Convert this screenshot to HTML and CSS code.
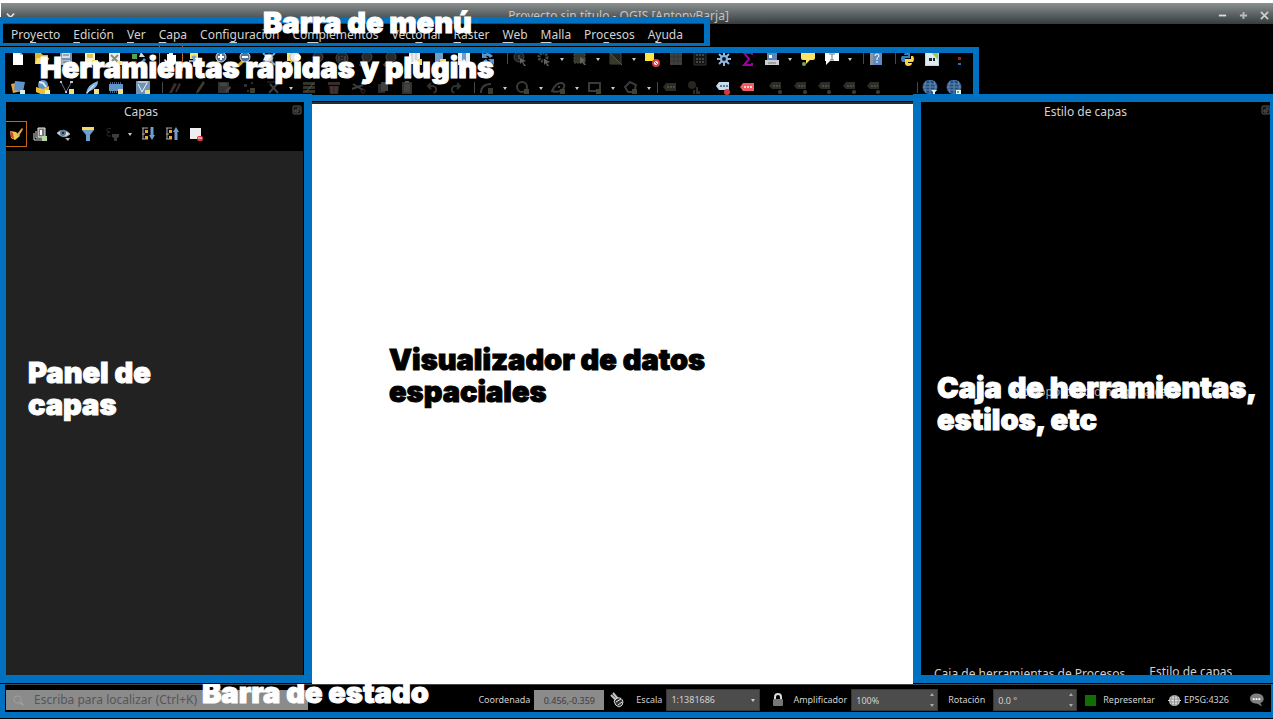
FILE: index.html
```html
<!DOCTYPE html>
<html lang="es">
<head>
<meta charset="utf-8">
<title>Proyecto sin título - QGIS</title>
<meta name="viewport" content="width=device-width, initial-scale=1">
<link rel="stylesheet" href="styles.css">
</head>
<body>
<svg class="sprite" aria-hidden="true">
  <symbol id="new" viewBox="0 0 16 16"><path d="M3 1h7l3 3v10H3z" fill="#fff"/><path d="M10 1l3 3h-3z" fill="#bbb"/></symbol>
  <symbol id="open" viewBox="0 0 16 16"><path d="M1 2h6l2 2h5v9H1z" fill="#e0b82c"/><path d="M3 7h12l-2 6H1z" fill="#fbe36b"/></symbol>
  <symbol id="save" viewBox="0 0 16 16"><path d="M2 2h12v12H2z" fill="#6f93bd"/><path d="M4 2h8v5H4z" fill="#d9dde2"/><path d="M4 9h8v5H4z" fill="#b5bcc5"/><path d="M5 4h6M5 11h6" stroke="#667"/></symbol>
  <symbol id="layout" viewBox="0 0 16 16"><path d="M2 1h10v12H2z" fill="#f6f2d5"/><path d="M4 3h6v4H4z" fill="#e5c646"/><path d="M9 9h6v5H9z" fill="#fbe36b"/></symbol>
  <symbol id="manager" viewBox="0 0 16 16"><path d="M2 1h11v13H2z" fill="#eee"/><path d="M4 4l8 8M11 4l-6 6" stroke="#8b8b75" stroke-width="2"/><path d="M10 10h5v4h-5z" fill="#fbe36b"/></symbol>
  <symbol id="style" viewBox="0 0 16 16"><path d="M1 3h5v5H1z" fill="#54a04b"/><path d="M10 1l4 5H8z" fill="#d9d9d9"/><circle cx="4" cy="12" r="2" fill="#d44"/><path d="M8 13l5-6 2 2-5 5z" fill="#5f90c5"/></symbol>
  <symbol id="hand" viewBox="0 0 16 16"><path d="M5 15L1 9l1-1 2 2V3h2v4-6h2v6-5h2v5-3h3v8l-3 3z" fill="#fff"/></symbol>
  <symbol id="pansel" viewBox="0 0 16 16"><path d="M3 2h8v6H3z" fill="#fbe36b"/><path d="M7 5v10M2 10h11M7 5L5 7m2-2l2 2M13 10l-2-2m2 2l-2 2" stroke="#78a5d6" stroke-width="2" fill="none"/></symbol>
  <symbol id="zin" viewBox="0 0 16 16"><path d="M7 10l-5 5" stroke="#d9aa23" stroke-width="3"/><circle cx="9" cy="6" r="5" fill="#54749d" stroke="#ddd"/><path d="M6 6h6M9 3v6" stroke="#fff" stroke-width="2"/></symbol>
  <symbol id="zout" viewBox="0 0 16 16"><path d="M7 10l-5 5" stroke="#d9aa23" stroke-width="3"/><circle cx="9" cy="6" r="5" fill="#54749d" stroke="#ddd"/><path d="M6 6h6" stroke="#fff" stroke-width="2"/></symbol>
  <symbol id="zfull" viewBox="0 0 16 16"><path d="M2 2l12 12M14 2L2 14" stroke="#78a5d6" stroke-width="2"/><circle cx="8" cy="7" r="4" fill="#cfd8e2" stroke="#999"/></symbol>
  <symbol id="zsel" viewBox="0 0 16 16"><path d="M2 1h6v9H2z" fill="#fbe36b"/><circle cx="10" cy="6" r="5" fill="#e8e8df" stroke="#bbb"/><path d="M7 10l-4 5" stroke="#d9aa23" stroke-width="2"/></symbol>
  <symbol id="zdim" viewBox="0 0 16 16"><path d="M6 10l-4 5" stroke="#3e3a31" stroke-width="3"/><circle cx="9" cy="6" r="5" fill="#292929" stroke="#484848"/></symbol>
  <symbol id="zone" viewBox="0 0 16 16"><circle cx="8" cy="7" r="6" fill="#222" stroke="#4a4a4a"/><path d="M5 5v5M11 5v5M8 5v1M8 8v1" stroke="#555"/></symbol>
  <symbol id="newmap" viewBox="0 0 16 16"><path d="M2 1h11v12H2z" fill="#eee"/><path d="M5 1v10M9 1v8" stroke="#bbb"/><path d="M10 8h5v6h-5z" fill="#f8dd5e"/></symbol>
  <symbol id="bookmark" viewBox="0 0 16 16"><path d="M4 1h8v12l-4-3-4 3z" fill="#6f9dcc"/><path d="M9 8h6v6H9z" fill="#f8dd5e"/></symbol>
  <symbol id="books" viewBox="0 0 16 16"><path d="M2 1h12v13H2z" fill="#e9edf1"/><path d="M6 1h4v9l-2-2-2 2z" fill="#6f9dcc"/></symbol>
  <symbol id="refresh" viewBox="0 0 16 16"><path d="M2 7V1l2 2q5-3 9 2l-3 2q-2-3-4-2l2 2zM14 8v6l-2-2q-5 3-9-2l3-2q2 3 4 2L8 8z" fill="#5b93cf"/></symbol>
  <symbol id="ident" viewBox="0 0 16 16"><circle cx="7" cy="6" r="5" fill="#202124" stroke="#444"/><path d="M7 4v4" stroke="#686868"/><path d="M8 7l6 3-3 1 3 4-2 0-2-4-2 2z" fill="#626262"/></symbol>
  <symbol id="cogdim" viewBox="0 0 16 16"><circle cx="7" cy="6" r="4" fill="none" stroke="#484848" stroke-width="3" stroke-dasharray="2 1"/><path d="M8 8l6 3-3 1 2 3-2 0-1-3-2 2z" fill="#626262"/></symbol>
  <symbol id="selrect" viewBox="0 0 16 16"><path d="M2 2h11v10H2z" fill="#37372c" stroke="#484840" stroke-dasharray="2 1"/><path d="M8 6l6 3-3 1 3 4-2 0-2-3-2 2z" fill="#626262"/></symbol>
  <symbol id="invert" viewBox="0 0 16 16"><path d="M2 2h11v11H2z" fill="#23231c" stroke="#444"/><path d="M2 2v11h11z" fill="#38382b"/><path d="M2 2l12 12" stroke="#555"/></symbol>
  <symbol id="desel" viewBox="0 0 16 16"><path d="M1 1h9v9H1z" fill="#ffe53e"/><circle cx="12" cy="12" r="3" fill="#fff" stroke="#e23b42" stroke-width="2"/><path d="M10 10l4 4" stroke="#e23b42"/></symbol>
  <symbol id="table" viewBox="0 0 16 16"><path d="M2 2h12v12H2z" fill="#404040"/><path d="M2 6h12M2 10h12M6 2v12M10 2v12" stroke="#333"/></symbol>
  <symbol id="abacus" viewBox="0 0 16 16"><path d="M2 1h12v13H2z" fill="#151515" stroke="#333"/><path d="M4 4h8M4 8h8M4 11h8" stroke="#444" stroke-width="2" stroke-dasharray="2 1"/></symbol>
  <symbol id="gear" viewBox="0 0 16 16"><path d="M8 1v14M1 8h14M3 3l10 10M13 3L3 13" stroke="#8fb6e1" stroke-width="2"/><circle cx="8" cy="8" r="4" fill="#8fb6e1"/><circle cx="8" cy="8" r="2" fill="#111a24"/></symbol>
  <symbol id="sigma" viewBox="0 0 16 16"><path d="M12 4V2H4l5 6-5 6h8v-2" fill="none" stroke="#a000a0" stroke-width="2"/></symbol>
  <symbol id="measure" viewBox="0 0 16 16"><path d="M3 1h10v8H3z" fill="#5b87b8"/><path d="M5 4h3v3H5z" fill="#fff"/><path d="M1 9h14v5H1z" fill="#c9ccd0"/><path d="M4 12h8" stroke="#777"/></symbol>
  <symbol id="tip" viewBox="0 0 16 16"><rect x="1" y="0" width="14" height="9" rx="2" fill="#fbe36b"/><path d="M6 8h5l-5 5z" fill="#fbe36b"/><circle cx="4" cy="13" r="2" fill="#7aa65e"/></symbol>
  <symbol id="textann" viewBox="0 0 16 16"><path d="M1 0h14v10H6l-4 4v-4H1z" fill="#fff"/><path d="M5 3h6M8 3v6M6 9h4" stroke="#777"/></symbol>
  <symbol id="help" viewBox="0 0 16 16"><path d="M2 1h12v13H2z" fill="#5b8bc2"/><path d="M2 1h3v13H2z" fill="#8f969d"/><path d="M7 5q0-2 2-2t2 2q0 1-2 2v2M9 10v2" stroke="#fff" fill="none"/></symbol>
  <symbol id="python" viewBox="0 0 16 16"><path d="M5 1h5v6H5v4H2q-2-4 0-6h6V4H4z" fill="#3d7fb4"/><path d="M11 5h2q2 3 0 6H8v1h4q0 3-4 3-3 0-3-3V8h6z" fill="#ffd43b"/></symbol>
  <symbol id="mapsearch" viewBox="0 0 16 16"><path d="M1 0h14v15H1z" fill="#b9d6e5"/><path d="M2 1h12v13H2z" fill="#dcecf3"/><path d="M7 1h7v8z" fill="#9ccb4a"/><path d="M5 7h3v3H5zM9 7h2v3H9z" fill="#222"/></symbol>
  <symbol id="dots" viewBox="0 0 16 16"><path d="M7 6h3v3H7z" fill="#9c1c27"/><path d="M7 12h3v2H7z" fill="#3a69a5"/></symbol>
  <symbol id="arrow" viewBox="0 0 8 8"><path d="M2 3h4L4 6z" fill="#ccc"/></symbol>

  <symbol id="source" viewBox="0 0 16 16"><path d="M1 4l9-2 2 9-9 2z" fill="#eda53b"/><path d="M5 1l10 1-2 10-9-2z" fill="#5f93cb"/><path d="M10 10h5v5h-5z" fill="#ddeed5"/></symbol>
  <symbol id="geopkg" viewBox="0 0 16 16"><circle cx="8" cy="5" r="5" fill="#5f93cb"/><path d="M4 2l4 1 3 4" stroke="#dfe9f2" stroke-width="2" fill="none"/><path d="M1 7l7 2 6-3v6l-6 3-7-3z" fill="#f0bd35"/><path d="M10 10h5v5h-5z" fill="#fbf3a0"/></symbol>
  <symbol id="shape" viewBox="0 0 16 16"><path d="M2 2l5 10 5-9" fill="none" stroke="#6c7580"/><path d="M1 1h2v2H1zM11 1h3v2h-3zM6 11h2v2H6z" fill="#b5c5d5"/><path d="M10 9h5v5h-5z" fill="#f8dd7e"/></symbol>
  <symbol id="feather" viewBox="0 0 16 16"><path d="M2 13Q4 4 14 1q0 6-6 9-3 1-5 4z" fill="#85b4e3"/><path d="M3 13l7-8" stroke="#e9f2fa"/><path d="M10 9h5v5h-5z" fill="#f8dd7e"/></symbol>
  <symbol id="chip" viewBox="0 0 16 16"><path d="M1 4h14v7H1z" fill="#5f93cb"/><path d="M2 3h12M2 12h7" stroke="#a7c5e2" stroke-dasharray="1 1"/><path d="M10 9h5v5h-5z" fill="#f8dd7e"/></symbol>
  <symbol id="virtual" viewBox="0 0 16 16"><path d="M1 1h14v14H1z" fill="#7192b3"/><path d="M3 4l4 8 5-9M3 2h10" fill="none" stroke="#e9f2fa"/><path d="M10 10h5v5h-5z" fill="#f8dd7e"/></symbol>
  <symbol id="pencils" viewBox="0 0 16 16"><path d="M2 13l5-10 3 1-5 9zM8 12l4-9 2 1-4 8z" fill="#3b2d2a"/></symbol>
  <symbol id="pencil" viewBox="0 0 16 16"><path d="M4 14l1-4 6-9 2 2-6 9z" fill="#3d3b2d"/></symbol>
  <symbol id="savedim" viewBox="0 0 16 16"><path d="M2 2h11v11H2z" fill="#333"/><path d="M4 3h7v3H4z" fill="#454545"/><path d="M9 11l5-5 1 2-5 5z" fill="#4a4837"/></symbol>
  <symbol id="points" viewBox="0 0 16 16"><path d="M3 4h3v3H3zM10 2h2v2h-2zM6 10h2v2H6z" fill="#303030"/><path d="M9 8h5v5H9z" fill="#413e2c"/></symbol>
  <symbol id="vertex" viewBox="0 0 16 16"><path d="M5 4l8 9M13 3L4 13" stroke="#3e3e3e" stroke-width="2"/><path d="M2 2h9v3" fill="none" stroke="#333"/></symbol>
  <symbol id="multi" viewBox="0 0 16 16"><path d="M2 2h12v3H2zM2 6h12v3H2zM2 10h12v3H2z" fill="#34332c"/><path d="M5 12l8-9" stroke="#5c5a49"/></symbol>
  <symbol id="trash" viewBox="0 0 16 16"><path d="M2 2h12v3H2zM3 6h10l-1 8H4z" fill="#392a27"/><path d="M6 6v7M10 6v7" stroke="#484040"/></symbol>
  <symbol id="cut" viewBox="0 0 16 16"><path d="M3 4l10 6M2 9l11-4" stroke="#3c3c3c" stroke-width="2"/><circle cx="13" cy="11" r="2" fill="none" stroke="#3d2828"/></symbol>
  <symbol id="copy" viewBox="0 0 16 16"><path d="M3 4h7v9H3z" fill="#2b2b2b"/><path d="M6 2h7v9H6z" fill="#404040"/></symbol>
  <symbol id="paste" viewBox="0 0 16 16"><path d="M3 2h10v12H3z" fill="#34322c"/><path d="M5 4h6v8H5z" fill="#424242"/><path d="M6 1h4v2H6z" fill="#555"/></symbol>
  <symbol id="undo" viewBox="0 0 16 16"><path d="M7 3L4 6l3 3M4 6h4q5 0 4 5l-2 2" fill="none" stroke="#382f29" stroke-width="2"/></symbol>
  <symbol id="redo" viewBox="0 0 16 16"><path d="M9 3l3 3-3 3M12 6H8q-5 0-4 5l2 2" fill="none" stroke="#2b342c" stroke-width="2"/></symbol>
  <symbol id="curve" viewBox="0 0 16 16"><path d="M2 13Q2 4 12 4" fill="none" stroke="#3c3c3c" stroke-width="2"/><path d="M9 8h5v6H9z" fill="#3d3a2b"/></symbol>
  <symbol id="circ" viewBox="0 0 16 16"><circle cx="7" cy="7" r="5" fill="none" stroke="#3a3a3a" stroke-width="2"/><path d="M9 9h5v5H9z" fill="#444133"/></symbol>
  <symbol id="ell" viewBox="0 0 16 16"><path d="M1 11Q5 2 11 3q5 2 0 7-4 3-10 1z" fill="none" stroke="#3a3a3a" stroke-width="2"/><circle cx="8" cy="7" r="1" fill="#555"/><path d="M9 9h5v5H9z" fill="#444133"/></symbol>
  <symbol id="rect" viewBox="0 0 16 16"><path d="M2 3h11v8H2z" fill="none" stroke="#3a3a3a" stroke-width="2"/><path d="M9 9h5v5H9z" fill="#444133"/></symbol>
  <symbol id="poly" viewBox="0 0 16 16"><path d="M2 7l5-5 6 3-2 7H5z" fill="none" stroke="#3a3a3a" stroke-width="2"/><path d="M9 9h5v5H9z" fill="#444133"/></symbol>
  <symbol id="tagdim" viewBox="0 0 16 16"><path d="M1 7l3-4h10v8H4z" fill="#2d2c26"/><path d="M5 7h8" stroke="#4a493f" stroke-width="2" stroke-dasharray="2 1"/></symbol>
  <symbol id="tagdim2" viewBox="0 0 16 16"><path d="M1 6l3-4h9v7H4z" fill="#2d2c26"/><path d="M5 6h7" stroke="#4a493f" stroke-width="2" stroke-dasharray="2 1"/><circle cx="12" cy="12" r="2" fill="#3c3c3c"/></symbol>
  <symbol id="piedim" viewBox="0 0 16 16"><circle cx="6" cy="5" r="4" fill="#26271f"/><path d="M6 1v4l4 0" fill="#352020"/><path d="M8 14v-4M11 14V7M13 14v-3" stroke="#2d2d2d" stroke-width="2"/></symbol>
  <symbol id="tagblue" viewBox="0 0 16 16"><path d="M1 6l3-4h10v8H4z" fill="#c7dcf2"/><path d="M5 6h8" stroke="#6c7988" stroke-width="2" stroke-dasharray="2 1"/><circle cx="12" cy="12" r="3" fill="#d33b3b"/></symbol>
  <symbol id="tagred" viewBox="0 0 16 16"><path d="M1 7l3-4h11v8H4z" fill="#f15b62"/><path d="M5 7h9" stroke="#ffd4d4" stroke-width="2" stroke-dasharray="2 1"/></symbol>
  <symbol id="globe" viewBox="0 0 16 16"><circle cx="8" cy="7" r="7" fill="#234f80" stroke="#3f6c9f"/><path d="M1 7h14M2 4h12M2 10h12M8 0v14M4 1q-3 6 0 12M12 1q3 6 0 12" fill="none" stroke="#6288b2"/><path d="M9 10h6l-2 2v3h-2v-3z" fill="#e8f5e5"/></symbol>
  <symbol id="globe2" viewBox="0 0 16 16"><circle cx="8" cy="7" r="7" fill="#234f80" stroke="#3f6c9f"/><path d="M1 7h14M2 4h12M2 10h12M8 0v14M4 1q-3 6 0 12M12 1q3 6 0 12" fill="none" stroke="#6288b2"/><path d="M10 10h5v5h-5z" fill="#e8f5e5"/><circle cx="12" cy="12" r="1" fill="#486"/></symbol>

  <symbol id="brush" viewBox="0 0 16 16"><path d="M2 5l6 1 4 4-5 4-4-2z" fill="#f2c94c"/><path d="M2 5l3 2 1 6-3-2z" fill="#d6403c"/><path d="M9 8l5-6 1 1-4 7z" fill="#f2a54c"/><path d="M7 7l4 4" stroke="#b5c25f"/></symbol>
  <symbol id="group" viewBox="0 0 16 16"><path d="M2 7v7h8M4 5v7h8" fill="none" stroke="#ddd"/><path d="M6 2h7v9H6z" fill="#777" stroke="#eee"/><path d="M9 4v5" stroke="#fff" stroke-width="2"/><path d="M10 10h5v5h-5z" fill="#b5d8ac"/></symbol>
  <symbol id="eye" viewBox="0 0 16 16"><path d="M1 7q6-6 13 1-6 6-13-1z" fill="#ddd" stroke="#999"/><circle cx="7" cy="7" r="3" fill="#51779e"/><circle cx="7" cy="7" r="1" fill="#111"/><path d="M9 12h5l-2 3z" fill="#bbb"/></symbol>
  <symbol id="filter" viewBox="0 0 16 16"><path d="M2 4h12L10 9v6H6V9z" fill="#6f9dcc"/><path d="M2 1h12v3H2z" fill="#f4dc59"/></symbol>
  <symbol id="epsfilter" viewBox="0 0 16 16"><path d="M7 3Q2 1 3 5l3 1q-5 1-2 4h3" fill="none" stroke="#292929"/><path d="M8 8h7v3l-2 1v3h-3v-3l-2-1z" fill="#3c3c3c"/></symbol>
  <symbol id="expand" viewBox="0 0 16 16"><path d="M2 2h6M2 8h3M2 13h6M3 2v11" fill="none" stroke="#aaa"/><path d="M5 4h3v3H5zM5 10h3v3H5z" fill="#f0a23c"/><path d="M12 1v9" stroke="#6f9dcc" stroke-width="3"/><path d="M9 9h6l-3 5z" fill="#6f9dcc"/></symbol>
  <symbol id="collapse" viewBox="0 0 16 16"><path d="M2 2h6M2 8h3M2 13h6M3 2v11" fill="none" stroke="#aaa"/><path d="M5 4h3v3H5zM5 10h3v3H5z" fill="#f0a23c"/><path d="M12 5v9" stroke="#6f9dcc" stroke-width="3"/><path d="M9 6h6l-3-5z" fill="#6f9dcc"/></symbol>
  <symbol id="remove" viewBox="0 0 16 16"><path d="M2 2h11v11H2z" fill="#eee"/><rect x="9" y="10" width="6" height="5" rx="2" fill="#dc3845"/><path d="M10 12h4" stroke="#fff"/></symbol>
  <symbol id="float" viewBox="0 0 10 10"><rect x="1" y="1" width="8" height="8" rx="1" fill="#161616" stroke="#555"/><path d="M3 5h3v2H3zM5 3h2v2" fill="none" stroke="#555"/></symbol>

  <symbol id="search" viewBox="0 0 12 12"><circle cx="5" cy="5" r="4" fill="none" stroke="#a0a0a0"/><path d="M8 8l3 3" stroke="#a0a0a0" stroke-width="2"/></symbol>
  <symbol id="mouse" viewBox="0 0 16 16"><path d="M2 3l6 6M4 1l5 6" stroke="#c6c6c6" stroke-width="2"/><path d="M8 6q5-1 6 4 0 4-4 5-4-1-5-6z" fill="#333" stroke="#ddd"/><path d="M7 10l5-3M9 13l4-3" stroke="#eee"/></symbol>
  <symbol id="lock" viewBox="0 0 12 16"><path d="M3 8V5q0-3 3-3t3 3v3" fill="none" stroke="#ddd" stroke-width="2"/><rect x="1" y="7" width="10" height="7" rx="1" fill="#777"/></symbol>
  <symbol id="crs" viewBox="0 0 14 14"><circle cx="7" cy="7" r="6" fill="#b5b5b5"/><path d="M0 7h14M2 4h10M2 10h10" stroke="#e4e4e4"/><path d="M7 1v12M4 2q-2 5 0 10M10 2q2 5 0 10" fill="none" stroke="#8a8a8a"/></symbol>
  <symbol id="bubble" viewBox="0 0 16 14"><path d="M8 0c10 0 9 10 4 10l2 4-5-3C-2 11-1 0 8 0z" fill="#808080"/><path d="M4 5h2v2H4zM7 5h2v2H7zM10 5h2v2h-2z" fill="#fff"/></symbol>
</svg>

<div class="app">
  <header class="titlebar">
    <button class="win" aria-label="Menú de ventana"><svg viewBox="0 0 10 10"><path d="M1 3l4 4 4-4" fill="none" stroke="#ddd" stroke-width="2"/></svg></button>
    <h1>Proyecto sin título - QGIS [AntonyBarja]</h1>
    <div class="wincontrols">
      <button class="win" aria-label="Minimizar"><svg viewBox="0 0 10 10"><path d="M1 5h8" stroke="#ddd" stroke-width="2"/></svg></button>
      <button class="win" aria-label="Maximizar"><svg viewBox="0 0 10 10"><path d="M1 5h8M5 1v8" stroke="#bbb" stroke-width="2"/></svg></button>
      <button class="win" aria-label="Cerrar"><svg viewBox="0 0 10 10"><path d="M1 1l8 8M9 1L1 9" stroke="#ccc" stroke-width="2"/></svg></button>
    </div>
  </header>

  <nav class="menubar">
    <button>Pro<u>y</u>ecto</button><button><u>E</u>dición</button><button><u>V</u>er</button><button><u>C</u>apa</button><button>Confi<u>g</u>uración</button><button>Co<u>m</u>plementos</button><button>Vect<u>o</u>rial</button><button><u>R</u>aster</button><button><u>W</u>eb</button><button><u>M</u>alla</button><button>Pro<u>c</u>esos</button><button>A<u>y</u>uda</button>
    <div class="frame frame-menu"></div>
    <p class="note note-menu">Barra de menú</p>
  </nav>

  <section class="toolbars">
    <div class="toolbar">
      <div class="group g6">
        <button aria-label="Nuevo"><svg><use href="#new"/></svg></button><button aria-label="Abrir"><svg><use href="#open"/></svg></button><button aria-label="Guardar"><svg><use href="#save"/></svg></button><button aria-label="Nueva composición"><svg><use href="#layout"/></svg></button><button aria-label="Administrador"><svg><use href="#manager"/></svg></button><button aria-label="Estilos"><svg><use href="#style"/></svg></button>
      </div>
      <i class="sep plain"></i>
      <div class="group g14">
        <button class="active" aria-label="Desplazar"><svg><use href="#hand"/></svg></button><button aria-label="Desplazar a selección"><svg><use href="#pansel"/></svg></button><button aria-label="Acercar"><svg><use href="#zin"/></svg></button><button aria-label="Alejar"><svg><use href="#zout"/></svg></button><button aria-label="Zum general"><svg><use href="#zfull"/></svg></button><button aria-label="Zum a selección"><svg><use href="#zsel"/></svg></button><button aria-label="Zum a capa"><svg><use href="#zdim"/></svg></button><button aria-label="Zum nativo"><svg><use href="#zone"/></svg></button><button aria-label="Zum anterior"><svg><use href="#zdim"/></svg></button><button aria-label="Zum siguiente"><svg><use href="#zdim"/></svg></button><button aria-label="Nueva vista"><svg><use href="#newmap"/></svg></button><button aria-label="Nuevo marcador"><svg><use href="#bookmark"/></svg></button><button aria-label="Marcadores"><svg><use href="#books"/></svg></button><button aria-label="Actualizar"><svg><use href="#refresh"/></svg></button>
      </div>
      <i class="sep"></i>
      <button aria-label="Identificar"><svg><use href="#ident"/></svg></button><button aria-label="Acciones"><svg><use href="#cogdim"/></svg></button><button class="more" aria-label="Más acciones"><svg><use href="#arrow"/></svg></button><button aria-label="Seleccionar"><svg><use href="#selrect"/></svg></button><button class="more" aria-label="Más selección"><svg><use href="#arrow"/></svg></button><button aria-label="Invertir"><svg><use href="#invert"/></svg></button><button class="more" aria-label="Más inversión"><svg><use href="#arrow"/></svg></button><button aria-label="Deseleccionar"><svg><use href="#desel"/></svg></button><button aria-label="Tabla de atributos"><svg><use href="#table"/></svg></button><button aria-label="Calculadora"><svg><use href="#abacus"/></svg></button><button aria-label="Procesos"><svg><use href="#gear"/></svg></button><button aria-label="Estadísticas"><svg><use href="#sigma"/></svg></button><button aria-label="Medir"><svg><use href="#measure"/></svg></button><button class="more" aria-label="Más medidas"><svg><use href="#arrow"/></svg></button><button aria-label="Avisos del mapa"><svg><use href="#tip"/></svg></button><button aria-label="Anotación"><svg><use href="#textann"/></svg></button><button class="more" aria-label="Más anotaciones"><svg><use href="#arrow"/></svg></button>
      <i class="sep"></i>
      <button aria-label="Ayuda"><svg><use href="#help"/></svg></button>
      <i class="sep"></i>
      <button aria-label="Consola de Python"><svg><use href="#python"/></svg></button><button aria-label="Buscar en el mapa"><svg><use href="#mapsearch"/></svg></button><i class="sep small"></i><button aria-label="Complemento"><svg><use href="#dots"/></svg></button>
    </div>
    <div class="toolbar">
      <div class="group g5">
        <button aria-label="Fuentes de datos"><svg><use href="#source"/></svg></button><button aria-label="Nuevo GeoPackage"><svg><use href="#geopkg"/></svg></button><button aria-label="Nuevo shapefile"><svg><use href="#shape"/></svg></button><button aria-label="Nueva SpatiaLite"><svg><use href="#feather"/></svg></button><button aria-label="Nueva capa temporal"><svg><use href="#chip"/></svg></button>
      </div>
      <i class="sep small"></i>
      <button aria-label="Capa virtual"><svg><use href="#virtual"/></svg></button>
      <i class="sep"></i>
      <div class="group g5">
        <button aria-label="Ediciones actuales"><svg><use href="#pencils"/></svg></button><button aria-label="Conmutar edición"><svg><use href="#pencil"/></svg></button><button aria-label="Guardar cambios"><svg><use href="#savedim"/></svg></button><button aria-label="Añadir punto"><svg><use href="#points"/></svg></button><button aria-label="Vértices"><svg><use href="#vertex"/></svg></button>
      </div>
      <button class="more" aria-label="Más vértices"><svg><use href="#arrow"/></svg></button>
      <div class="group g7">
        <button aria-label="Modificar atributos"><svg><use href="#multi"/></svg></button><button aria-label="Borrar"><svg><use href="#trash"/></svg></button><button aria-label="Cortar"><svg><use href="#cut"/></svg></button><button aria-label="Copiar"><svg><use href="#copy"/></svg></button><button aria-label="Pegar"><svg><use href="#paste"/></svg></button><button aria-label="Deshacer"><svg><use href="#undo"/></svg></button><button aria-label="Rehacer"><svg><use href="#redo"/></svg></button>
      </div>
      <i class="sep short"></i>
      <button aria-label="Curva"><svg><use href="#curve"/></svg></button><button class="more" aria-label="Más curvas"><svg><use href="#arrow"/></svg></button><button aria-label="Círculo"><svg><use href="#circ"/></svg></button><button class="more" aria-label="Más círculos"><svg><use href="#arrow"/></svg></button><button aria-label="Elipse"><svg><use href="#ell"/></svg></button><button class="more" aria-label="Más elipses"><svg><use href="#arrow"/></svg></button><button aria-label="Rectángulo"><svg><use href="#rect"/></svg></button><button class="more" aria-label="Más rectángulos"><svg><use href="#arrow"/></svg></button><button aria-label="Polígono"><svg><use href="#poly"/></svg></button><button class="more" aria-label="Más polígonos"><svg><use href="#arrow"/></svg></button>
      <i class="sep small lined"></i>
      <button aria-label="Etiquetado"><svg><use href="#tagdim"/></svg></button><button aria-label="Diagramas"><svg><use href="#piedim"/></svg></button>
      <i class="sep medium"></i>
      <button aria-label="Resaltar etiquetas"><svg><use href="#tagblue"/></svg></button><button aria-label="Etiquetas no colocadas"><svg><use href="#tagred"/></svg></button>
      <i class="sep medium"></i>
      <div class="group g5">
        <button aria-label="Fijar etiqueta"><svg><use href="#tagdim2"/></svg></button><button aria-label="Mostrar etiqueta"><svg><use href="#tagdim2"/></svg></button><button aria-label="Mover etiqueta"><svg><use href="#tagdim2"/></svg></button><button aria-label="Rotar etiqueta"><svg><use href="#tagdim2"/></svg></button><button aria-label="Cambiar etiqueta"><svg><use href="#tagdim2"/></svg></button>
      </div>
      <i class="sep wide"></i>
      <button aria-label="Servicios web"><svg><use href="#globe"/></svg></button><button aria-label="Buscar servicios"><svg><use href="#globe2"/></svg></button>
      <i class="sep"></i>
    </div>
    <div class="frame frame-tools"></div>
    <p class="note note-tools">Herramientas rápidas y plugins</p>
  </section>

  <main class="workspace">
    <aside class="panel layers">
      <h2>Capas</h2>
      <button class="float" aria-label="Panel flotante"><svg><use href="#float"/></svg></button>
      <div class="layerbar">
        <button class="active" aria-label="Estilo"><svg><use href="#brush"/></svg></button><button aria-label="Añadir grupo"><svg><use href="#group"/></svg></button><button aria-label="Visibilidad"><svg><use href="#eye"/></svg></button><button aria-label="Filtrar"><svg><use href="#filter"/></svg></button><button aria-label="Filtrar por expresión"><svg><use href="#epsfilter"/></svg></button><button class="more" aria-label="Más filtros"><svg><use href="#arrow"/></svg></button><button aria-label="Expandir"><svg><use href="#expand"/></svg></button><button aria-label="Contraer"><svg><use href="#collapse"/></svg></button><button aria-label="Eliminar"><svg><use href="#remove"/></svg></button>
      </div>
      <div class="tree"></div>
      <div class="frame frame-left"></div>
      <p class="note note-left">Panel de<br>capas</p>
    </aside>
    <section class="canvas">
      <p class="note note-canvas">Visualizador de datos<br>espaciales</p>
    </section>
    <aside class="panel styling">
      <h2>Estilo de capas</h2>
      <button class="float" aria-label="Panel flotante"><svg><use href="#float"/></svg></button>
      <p class="empty">No soportado o ninguna capa</p>
      <div class="tabs"><button>Caja de herramientas de Procesos</button><button class="current">Estilo de capas</button></div>
      <div class="frame frame-right"></div>
      <p class="note note-right">Caja de herramientas,<br>estilos, etc</p>
    </aside>
  </main>

  <footer class="status">
    <label class="locator"><svg><use href="#search"/></svg><input type="text" placeholder="Escriba para localizar (Ctrl+K)" aria-label="Localizar"></label>
    <div class="fields">
      <label for="coord">Coordenada</label><input id="coord" class="coord" type="text" value="0.456,-0.359">
      <button class="mouse" aria-label="Posición del ratón"><svg><use href="#mouse"/></svg></button>
      <label for="scale">Escala</label><div class="combo"><select id="scale"><option>1:1381686</option></select><svg><use href="#arrow"/></svg></div>
      <button class="lock" aria-label="Bloquear escala"><svg><use href="#lock"/></svg></button>
      <label for="mag">Amplificador</label><div class="spin"><input id="mag" type="text" value="100%"><svg viewBox="0 0 6 16"><path d="M1 4l2-3 2 3zM1 12l2 3 2-3z" fill="#aaa"/></svg></div>
      <label class="rotlabel" for="rot">Rotación</label><div class="spin rot"><input id="rot" type="text" value="0.0 °"><svg viewBox="0 0 6 16"><path d="M1 4l2-3 2 3zM1 12l2 3 2-3z" fill="#aaa"/></svg></div>
      <label class="render"><input type="checkbox" checked>Representar</label>
      <button class="crs"><svg><use href="#crs"/></svg>EPSG:4326</button>
      <button class="messages" aria-label="Mensajes"><svg><use href="#bubble"/></svg></button>
    </div>
    <div class="frame frame-status"></div>
    <p class="note note-status">Barra de estado</p>
  </footer>
</div>
</body>
</html>
```
FILE: styles.css
```css
* { box-sizing: border-box; }
body {
  margin: 0;
  background: #fff;
  color: #d2d2d2;
  font: 12px/16px "Noto Sans", sans-serif;
}
h1, h2, p { margin: 0; font: inherit; }
button, input, select {
  margin: 0;
  padding: 0;
  border: 0;
  background: none;
  color: inherit;
  font: inherit;
}
svg { display: block; width: 16px; height: 16px; flex: none; }
.sprite { position: absolute; width: 0; height: 0; }
.app {
  display: flex;
  flex-direction: column;
  height: 100vh;
  padding-top: 3px;
  overflow: hidden;
}

.titlebar {
  display: flex;
  align-items: center;
  justify-content: space-between;
  height: 21px;
  margin-left: 1px;
  padding: 4px 4px 0 5px;
  background: linear-gradient(#8b9090, #353c3f);
  flex: none;
}
.titlebar h1 { padding-left: 4px; color: #c4c4c4; }
.win svg { width: 9px; height: 9px; }
.wincontrols { display: flex; gap: 12px; }

.menubar {
  position: relative;
  z-index: 2;
  display: flex;
  align-items: center;
  gap: 13px;
  height: 22px;
  padding-left: 11px;
  background: #000;
  flex: none;
}
.menubar u { text-underline-offset: 3px; }

.toolbars {
  position: relative;
  z-index: 3;
  display: flex;
  flex-direction: column;
  gap: 4px;
  height: 56px;
  padding-left: 6px;
  background: #000;
  flex: none;
}
.toolbar { display: flex; height: 25px; }
.toolbar button, .layerbar button {
  display: flex;
  align-items: center;
  justify-content: center;
  flex: none;
  width: 24px;
}
.toolbar .more, .layerbar .more { width: 12px; }
.more svg { width: 8px; height: 8px; }
.group { display: flex; justify-content: space-between; flex: none; }
.g5 { width: 122px; }
.g6 { width: 145px; }
.g7 { width: 171px; }
.g14 { width: 341px; }
.toolbar .active, .layerbar .active { border: 1px solid #c06a17; }
.toolbar .active { border-top: 0; border-bottom: 0; }
.sep {
  width: 8px;
  height: 11px;
  align-self: center;
  border-right: 1px solid #484848;
  flex: none;
}
.sep.short { width: 7px; }
.sep.medium { width: 5px; border-color: transparent; }
.sep.small { width: 3px; border-color: transparent; }
.sep.small.lined { border-color: #484848; }
.sep.plain { border-color: transparent; }
.sep.wide { width: 32px; }

.workspace {
  position: relative;
  z-index: 4;
  display: grid;
  grid-template-columns: 312px 1fr 360px;
  flex: 1;
  min-height: 0;
}
.panel {
  position: relative;
  display: flex;
  flex-direction: column;
  background: #000;
}
.panel h2 { padding: 2px 0 1px; text-align: center; }
.float { position: absolute; top: 3px; right: 10px; }
.float svg { width: 10px; height: 10px; }
.layers { padding: 0 8px 8px 5px; }
.layers h2 { margin-right: 27px; }
.layerbar { display: flex; height: 26px; margin-bottom: 4px; }
.layerbar .active { width: 22px; margin-right: 1px; }
.tree { flex: 1; margin-right: 1px; background: #222; }
.canvas {
  position: relative;
  border-top: 2px solid #2b2b2b;
  background: #fff;
}
.styling { padding: 0 3px 0 8px; }
.styling h2 { margin-right: 20px; }
.styling .float { right: 2px; }
.empty { margin: auto 0; padding: 0 0 20px 3px; text-align: center; color: #a0a0a0; }
.tabs { display: flex; gap: 24px; align-items: flex-start; height: 20px; padding-left: 13px; margin-top: -19px; }
.tabs button { padding-top: 2px; }
.tabs .current { padding-top: 0; }

.status {
  position: relative;
  z-index: 3;
  display: flex;
  justify-content: space-between;
  align-items: center;
  height: 35px;
  padding: 0 9px 4px 6px;
  border-top: 1px solid #444;
  background: #000;
  font-size: 9px;
  flex: none;
}
.locator {
  display: flex;
  align-items: center;
  gap: 10px;
  width: 302px;
  height: 20px;
  padding-left: 7px;
  background: #8b8b8b;
  font-size: 12px;
}
.locator svg { width: 11px; height: 11px; }
.locator input { flex: 1; min-width: 0; outline: 0; }
.locator input::placeholder { color: #565656; opacity: 1; }
.fields { display: flex; align-items: center; }
.coord {
  width: 70px;
  height: 20px;
  margin: 0 5px 0 4px;
  background: #8b8b8b;
  color: #3c3c3c;
  text-align: center;
}
.mouse { margin-right: 11px; }
.combo, .spin { position: relative; height: 22px; margin-left: 4px; background: #4c4c4c; border: 1px solid #383838; }
.combo { width: 94px; }
.combo select { width: 100%; height: 100%; padding-left: 4px; appearance: none; }
.combo svg { position: absolute; right: 2px; top: 6px; width: 8px; height: 8px; }
.lock { margin: 0 9px 0 12px; }
.lock svg { width: 12px; }
.spin { width: 87px; }
.spin input { width: 100%; height: 100%; padding-left: 4px; }
.spin svg { position: absolute; right: 2px; top: 2px; width: 6px; }
.rotlabel { margin-left: 10px; }
.rot { width: 84px; margin-left: 8px; }
.render { display: flex; align-items: center; gap: 7px; margin-left: 8px; }
.render input { appearance: none; width: 11px; height: 11px; background: #0f7000; }
.crs { display: flex; align-items: center; gap: 3px; margin: 0 20px 0 13px; }
.crs svg { width: 13px; height: 13px; }
.messages svg { width: 15px; height: 14px; }

/* Blue frames and captions drawn over the interface */
.frame { position: absolute; border: 6px solid #0070c0; pointer-events: none; }
.frame-menu { left: -3px; top: -7px; width: 713px; bottom: -3px; }
.frame-tools { left: -1px; top: 1px; width: 980px; bottom: 1px; }
.frame-left, .frame-right { border-width: 8px; top: -8px; bottom: 1px; }
.frame-left { left: -2px; right: 0; }
.frame-right { left: 0; right: -5px; }
.frame-status { left: -1px; right: -4px; top: -8px; bottom: 1px; }
.note {
  position: absolute;
  z-index: 5;
  color: #fff;
  font: 900 29px/32px Inter, sans-serif;
  -webkit-text-stroke: 1px currentColor;
  white-space: nowrap;
}
.note-menu { left: 263px; top: -17px; }
.note-tools { left: 40px; top: 6px; }
.note-left { left: 28px; top: calc(50% - 36px); }
.note-canvas { left: 77px; top: calc(50% - 50px); color: #000; }
.note-right { left: 24px; top: calc(50% - 21px); }
.note-status { left: 202px; top: -8px; }
```
